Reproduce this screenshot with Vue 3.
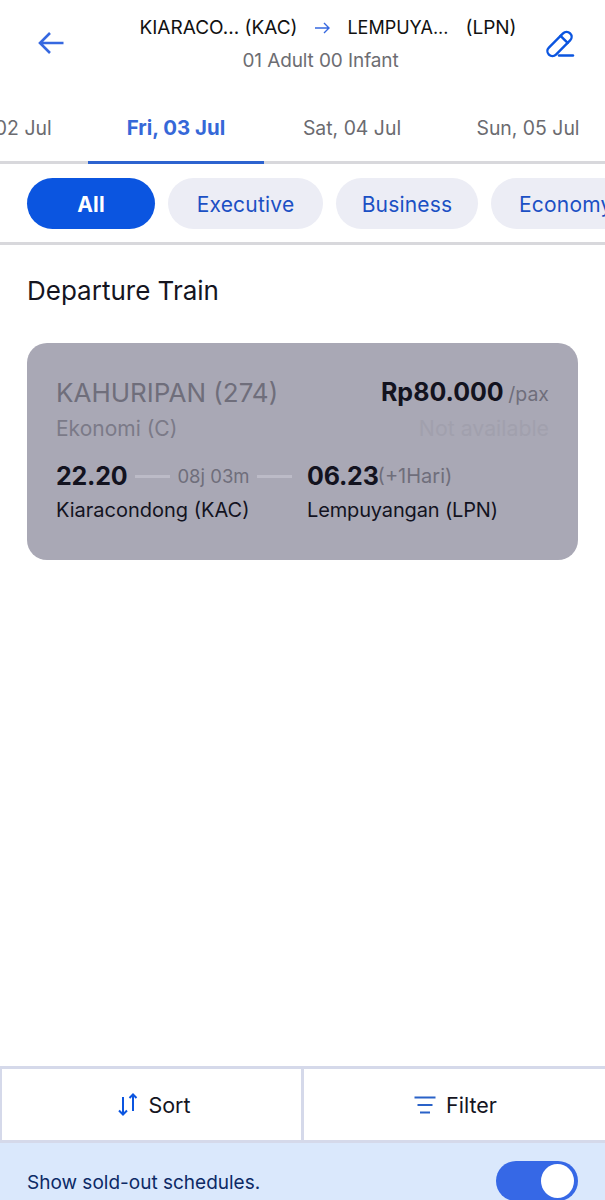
<script setup>
const dates = [
  { label: 'Thu, 02 Jul' },
  { label: 'Fri, 03 Jul', active: true },
  { label: 'Sat, 04 Jul' },
  { label: 'Sun, 05 Jul' }
]
const classes = [
  { label: 'All', width: 128 },
  { label: 'Executive', width: 155 },
  { label: 'Business', width: 142 },
  { label: 'Economy', width: 148 }
]
</script>

<template>
  <div class="page">
    <header class="top">
      <svg class="back" width="28" height="28" viewBox="0 0 28 28" fill="none" stroke="#3668e0" stroke-width="2.6">
        <path d="M26.500 14H3M13 4L3 14L13 24" />
      </svg>
      <div class="route">
        <div class="stations">
          <span>KIARACO... (KAC)</span>
          <svg width="16" height="12" viewBox="0 0 16 12" fill="none" stroke="#3668e0" stroke-width="1.400">
            <path d="M1 6H15M10 1L15 6L10 11" />
          </svg>
          <span class="dest">LEMPUYA...</span>
          <span>(LPN)</span>
        </div>
        <div class="pax">01 Adult 00 Infant</div>
      </div>
      <svg class="edit" width="32" height="32" viewBox="0 0 32 32" fill="none" stroke="#0b55e0" stroke-width="2.400" stroke-linecap="round">
        <g transform="rotate(-45 15.500 15)">
          <rect x="0.500" y="10" width="30" height="10" rx="5" />
          <path d="M22 10V20" />
        </g>
        <path d="M15 26.500H29" />
      </svg>
    </header>

    <nav class="dates">
      <div v-for="d in dates" :key="d.label" class="date" :class="{ active: d.active }">{{ d.label }}</div>
    </nav>

    <div class="chips">
      <div
        v-for="(c, i) in classes"
        :key="c.label"
        class="chip"
        :class="{ on: i === 0 }"
        :style="{ width: c.width + 'px' }"
      >{{ c.label }}</div>
    </div>

    <main class="content">
      <h2>Departure Train</h2>
      <div class="card">
        <div class="row">
          <span class="name">KAHURIPAN (274)</span>
          <span><b class="price">Rp80.000</b> <span class="per">/pax</span></span>
        </div>
        <div class="row sub">
          <span class="cls">Ekonomi (C)</span>
          <span class="na">Not available</span>
        </div>
        <div class="trip">
          <div class="from">
            <div class="times">
              <b class="time">22.20</b>
              <i class="dash"></i>
              <span class="dur">08j 03m</span>
              <i class="dash"></i>
            </div>
            <div class="station">Kiaracondong (KAC)</div>
          </div>
          <div>
            <div class="times">
              <b class="time">06.23</b><span class="next">(+1Hari)</span>
            </div>
            <div class="station to">Lempuyangan (LPN)</div>
          </div>
        </div>
      </div>
    </main>

    <div class="actions">
      <div class="action sort">
        <svg width="20" height="23" viewBox="0 0 20 23" fill="none" stroke="#0b55e0" stroke-width="2">
          <path d="M5 4V21.500M1 17.500L5 21.500L9 17.500M15 18V1.500M11.500 5L15 1.500L18.500 5" />
        </svg>
        <span>Sort</span>
      </div>
      <div class="action filter">
        <svg width="22" height="18" viewBox="0 0 22 18" fill="none" stroke="#2a62c8" stroke-width="2">
          <path d="M0.500 1.500H21.500M3.500 9H18.500M6 16.500H16" />
        </svg>
        <span>Filter</span>
      </div>
    </div>

    <footer class="soldout">
      <span>Show sold-out schedules.</span>
      <div class="toggle"><i class="knob"></i></div>
    </footer>
  </div>
</template>

<style scoped>
.page {
  position: relative;
  width: 605px;
  height: 1200px;
  overflow: hidden;
  display: flex;
  flex-direction: column;
  background: #fff;
  font-family: Inter, "Liberation Sans", sans-serif;
  color: #15151f;
}
.top {
  height: 87px;
  flex: none;
  display: flex;
  align-items: flex-start;
  justify-content: space-between;
  padding: 0 29px 0 37px;
  box-sizing: border-box;
}
.back { margin-top: 29px; }
.edit { margin-top: 29px; }
.route {
  flex: 1;
  padding: 15px 0 0 32px;
  text-align: center;
}
.stations {
  display: flex;
  align-items: center;
  justify-content: center;
  padding-left: 15px;
  gap: 17px;
  font-size: 19px;
  line-height: 26px;
  color: #111;
}
.dest { font-size: 18px; }
.pax {
  margin-top: 8px;
  font-size: 19px;
  line-height: 24px;
  letter-spacing: -0.1px;
  color: #6d6d72;
}
.dates {
  height: 77px;
  flex: none;
  display: flex;
  box-sizing: border-box;
  border-bottom: 3px solid #d8d8dc;
  margin-left: -88px;
  width: 781px;
}
.date {
  width: 176px;
  height: 77px;
  flex: none;
  box-sizing: border-box;
  padding-top: 28px;
  text-align: center;
  font-size: 19.400px;
  line-height: 26px;
  color: #6b6b70;
  border-bottom: 3px solid transparent;
}
.date.active {
  color: #3668d8;
  font-size: 20.400px;
  font-weight: 700;
  border-bottom-color: #2d63cf;
}
.chips {
  height: 81px;
  flex: none;
  display: flex;
  gap: 13px;
  padding: 14px 0 0 27px;
  box-sizing: border-box;
  overflow: hidden;
  border-bottom: 3px solid #d8d8dc;
}
.chip {
  height: 51px;
  flex: none;
  border-radius: 26px;
  text-align: center;
  background: #ecedf5;
  color: #1b50c4;
  font-size: 21px;
  letter-spacing: 0.2px;
  line-height: 53px;
}
.chip.on {
  background: #0b55e0;
  color: #fff;
  font-weight: 700;
}
.chip:last-child {
  text-align: left;
  padding-left: 28px;
}
.content {
  flex: 1;
  padding: 0 27px;
}
h2 {
  margin: 29px 0 0;
  font-size: 26px;
  line-height: 34px;
  font-weight: 400;
  color: #15151f;
}
.card {
  margin-top: 35px;
  height: 217px;
  box-sizing: border-box;
  padding: 32px 29px 0;
  border-radius: 20px;
  background: #a9a8b5;
}
.row {
  display: flex;
  align-items: center;
  justify-content: space-between;
  height: 34px;
}
.name {
  font-size: 26px;
  color: #6f6e7b;
}
.price {
  font-size: 25px;
  font-weight: 700;
  color: #13131f;
}
.per {
  font-size: 19.500px;
  color: #6f6e7b;
}
.sub { margin-top: 2px; }
.cls {
  font-size: 21px;
  color: #7b7a88;
}
.na {
  font-size: 21.300px;
  color: #a1a0ad;
}
.trip {
  display: flex;
  margin-top: 13px;
}
.from { width: 251px; }
.times {
  display: flex;
  align-items: center;
  height: 36px;
}
.time {
  font-size: 25px;
  font-weight: 700;
  letter-spacing: -0.2px;
  color: #13131f;
}
.dash {
  width: 35px;
  height: 3px;
  background: #bcbbc7;
  margin: 0 7px;
}
.times .dash:first-of-type { margin-left: 8px; }
.dur {
  font-size: 18.500px;
  color: #6f6e7b;
}
.next {
  margin-left: -1px;
  font-size: 20px;
  color: #6f6e7b;
}
.station {
  margin-top: 2px;
  font-size: 20px;
  line-height: 28px;
  color: #13131f;
}
.station.to { letter-spacing: -0.15px; }
.actions {
  height: 77px;
  flex: none;
  display: flex;
  box-sizing: border-box;
  border-top: 3px solid #d5d9ea;
  border-bottom: 3px solid #d5d9ea;
}
.action {
  box-sizing: border-box;
  display: flex;
  align-items: center;
  justify-content: center;
  gap: 10px;
  font-size: 21.500px;
  color: #15151f;
  border-left: 2px solid #d5d9ea;
}
.action.sort {
  width: 301px;
  flex: none;
  padding-left: 6px;
}
.action.filter {
  flex: 1;
  padding-left: 2px;
  border-left-width: 3px;
}
.soldout {
  height: 57px;
  flex: none;
  display: flex;
  justify-content: space-between;
  padding: 0 27px;
  box-sizing: border-box;
  background: #dae8fc;
  color: #0c2a66;
  font-size: 19px;
  line-height: 80px;
}
.toggle {
  width: 82px;
  height: 40px;
  margin-top: 18px;
  border-radius: 20px;
  background: #3668e6;
  position: relative;
}
.knob {
  position: absolute;
  right: 4px;
  top: 3px;
  width: 33px;
  height: 34px;
  border-radius: 50%;
  background: #fff;
}
</style>
